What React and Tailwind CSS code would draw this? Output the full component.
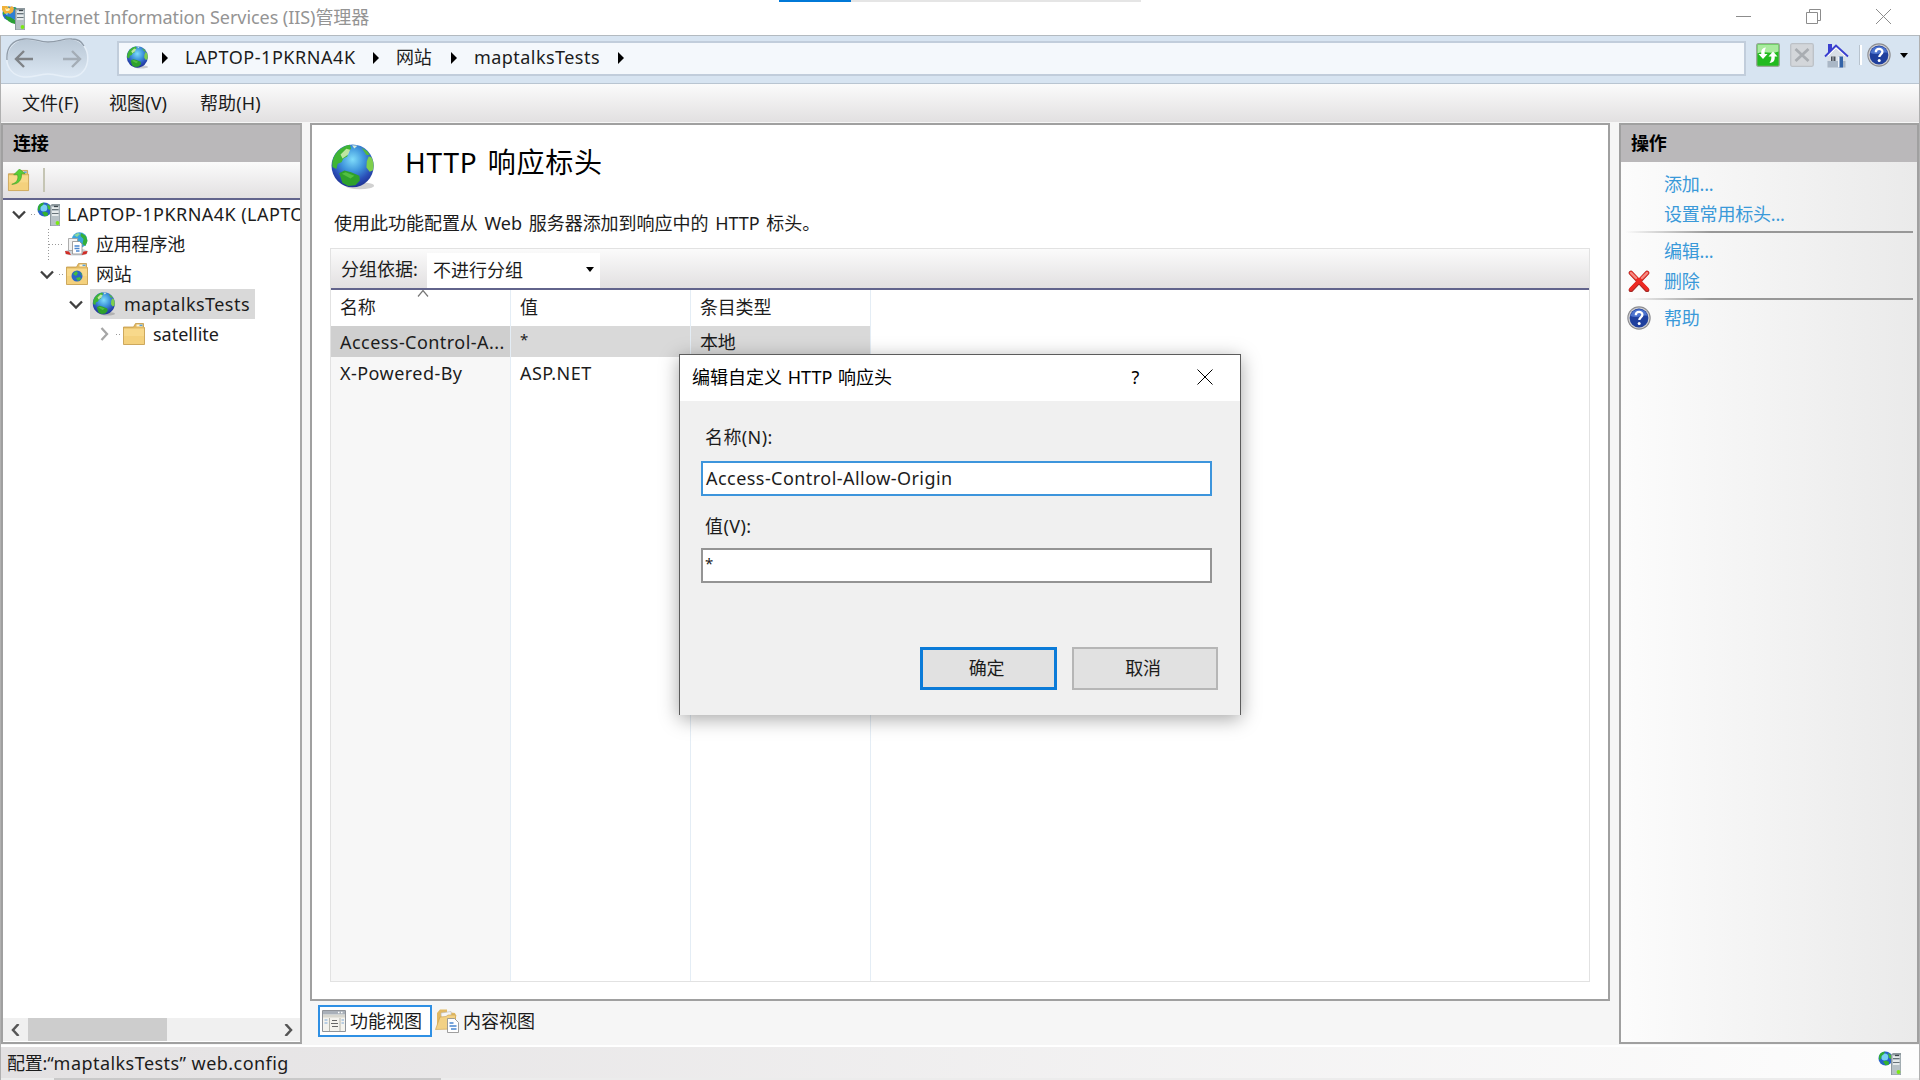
import React from 'react';

const Globe = ({ className, id }) => (
  <svg viewBox="0 0 24 24" className={className}>
    <defs>
      <radialGradient id={id} cx="0.5" cy="0.35" r="0.62">
        <stop offset="0" stopColor="#7fdcfa" />
        <stop offset="0.45" stopColor="#3f95dc" />
        <stop offset="0.8" stopColor="#2a4fb8" />
        <stop offset="1" stopColor="#22389a" />
      </radialGradient>
    </defs>
    <ellipse cx="15.5" cy="21.8" rx="7.5" ry="1.8" fill="#000" opacity="0.18" />
    <ellipse cx="11.8" cy="11.4" rx="11" ry="11.2" fill={`url(#${id})`} />
    <path d="M1.200 9.500C2 5 5.500 1.200 10.300 .4L11 2.200 9.500 4.500 9 6.500 7 7.500 6 9.500 4 10.300 3.300 13 1.200 12z" fill="#3fb534" />
    <path d="M5.500 5.500L8.500 2.500l2 .5-1 2.500-3 2z" fill="#dff3bd" opacity="0.8" />
    <path d="M11.500 .6l1.200 1.800 1.600-1.500z" fill="#e4f5dc" opacity="0.9" />
    <path d="M4.800 15.300l2.700-1.500 3.500.9 4.300 1.800.3 2.500-2.300 2.500-3.800.4-3-1.500z" fill="#2fa12c" />
    <path d="M6.200 15.500l2-.8 4.500 1.800-2 1.500z" fill="#63cc4c" opacity="0.7" />
    <path d="M20.200 6.500l1.300.3c1.400 2.500 1.500 5 .8 7l-1.600.7-1.700-2.200.2-3.300z" fill="#7ecf4c" />
    <path d="M16.500 2l3 1.800 1.200 2-1.700 0z" fill="#57b93a" />
  </svg>
);

const Tower = () => (
  <g>
    <path d="M13 3.500l2-1.500h8v22h-10z" fill="#8e999e" />
    <path d="M14 4h8.500v19.500H14z" fill="#b7c1c6" />
    <path d="M15 6h6.500M15 10h6.500M15 13h6.500" stroke="#f5f7f8" strokeWidth="1.300" />
    <path d="M15 7.500h6.500M15 11.500h6.500" stroke="#5f6a70" strokeWidth="0.900" />
    <path d="M17 4.500h4" stroke="#3c464c" strokeWidth="1.300" />
    <circle cx="20.500" cy="21" r="1.900" fill="#7bea12" />
  </g>
);

const ServerIcon = ({ className, badge }) => (
  <svg viewBox="0 0 24 24" className={className}>
    <circle cx="7.500" cy="7.500" r="7" fill="#2763cb" />
    <circle cx="6.800" cy="6" r="3.500" fill="#77cff5" />
    <path d="M1 5c1-3 3-4.200 6-4.500L6 3 3.500 5 3 8 1 9z" fill="#2fae35" />
    <path d="M5 10.500l3-1 3 1.500-.5 3-3 .3z" fill="#35b22f" />
    <path d="M10 2l3 2v4l-2-1z" fill="#42bb38" />
    {badge && (
      <g>
        <path d="M8 1h5l5 3-2 7-6 5-6-3z" fill="#2d7fd4" />
        <path d="M12 1l4 2 1 4-4-2z" fill="#35a83a" />
        <path d="M0 0h5l2 2 3-2 2 2-1 4-3 2-2-1-3 1-3-4z" fill="#f0b23c" />
        <path d="M3 2l2 1 2-1 1 2-2 1-2 0z" fill="#fff0b0" />
        <path d="M3 10l5 1 5 3v4C8 17 4 14 3 10z" fill="#2b9f35" />
      </g>
    )}
    <Tower />
  </svg>
);

const FolderIcon = ({ className, children }) => (
  <svg viewBox="0 0 24 24" className={className}>
    <path d="M1.500 5h10l2-3.500h8V5l1 .5V22.500h-21z" fill="#e2b963" stroke="#c49a48" strokeWidth="0.800" />
    <path d="M2 6.500h20V22H2z" fill="#f8d98b" />
    <path d="M2 14h20v8H2z" fill="#f1cb75" opacity="0.600" />
    <path d="M14.500 2.500h6v2h-6z" fill="#fff6dc" />
    <path d="M17.500 2.600h3v1.500h-3z" fill="#59a3dc" />
    {children}
  </svg>
);

const PoolIcon = ({ className }) => (
  <svg viewBox="0 0 24 24" className={className}>
    <circle cx="15.500" cy="8" r="7.800" fill="#3aa3de" />
    <path d="M17 1l5 3 1.500 5-2 5-3-2 1-5-3-3z" fill="#34b03a" />
    <path d="M10 3l4-2 2 1-3 3z" fill="#8ed89a" />
    <path d="M1 19l5-2h13l5 2-1 3-5 1.500H7L1 22z" fill="#cdd3d8" />
    <path d="M1 19l4 .5 2 3.500-5-1zM23.500 19l-4 .5-2 3.500 5-1z" fill="#d12c25" />
    <path d="M4.500 6.500h9v12h-9z" fill="#f1f1f1" stroke="#999" strokeWidth="0.800" />
    <path d="M8.500 9.500h7l2.500 2.500v10H8.500z" fill="#fff" stroke="#8d8d8d" strokeWidth="0.800" />
    <path d="M10.500 14h5M10.500 16.500h5M12 19h3.500" stroke="#4a86cf" strokeWidth="1.300" />
  </svg>
);

const HelpIcon = ({ className }) => (
  <svg viewBox="0 0 24 24" className={className}>
    <circle cx="12" cy="12" r="11.700" fill="#8b8b8f" />
    <circle cx="12" cy="12" r="10.600" fill="#d0d0d2" />
    <circle cx="12" cy="12" r="9.400" fill="#1f3f9d" />
    <path d="M3.500 10a8.700 8.700 0 0 1 17 0c-4-2-10 3-17 0z" fill="#4d74cf" />
    <path d="M8.800 9.200c0-4.400 6.600-4.200 6.600-.4 0 2.600-3.100 2.600-3.100 5.200" fill="none" stroke="#fff" strokeWidth="2.300" />
    <circle cx="12.200" cy="17.400" r="1.500" fill="#fff" />
  </svg>
);

const RefreshIcon = () => (
  <svg viewBox="0 0 24 24" className="h-6 w-6">
    <rect x="0.700" y="0.700" width="22.600" height="22.600" rx="1.500" fill="#22bb1f" stroke="#98a898" strokeWidth="1.300" />
    <path d="M1.500 1.500h21v7c-7 3-14-1-21 2z" fill="#a9eb9e" />
    <path d="M10 4.500C5.500 5 5 8 5.300 11H2.500l4.500 5 4.500-5H8.700c-.2-2.500 0-4 1.300-6.500z" fill="#fff" />
    <path d="M13.500 20c4.500-.5 5.500-3 5.200-6.500h2.800l-4.500-5-4.500 5h2.800c.2 2.500-.2 4-1.800 6.500z" fill="#fff" />
  </svg>
);

const StopIcon = () => (
  <svg viewBox="0 0 24 24" className="h-6 w-6">
    <rect x="0.700" y="0.700" width="22.600" height="22.600" rx="1.500" fill="#d3d6da" stroke="#bcc1c7" strokeWidth="1.300" />
    <path d="M5.500 6l13 12M18.500 6L5.500 18" stroke="#a9adb2" strokeWidth="2.800" />
  </svg>
);

const HomeIcon = () => (
  <svg viewBox="0 0 25 25" className="h-[25px] w-[25px]">
    <path d="M4 1h4v6l-4 4z" fill="#3a3fd0" />
    <path d="M3.500 12L12 3.500l9.500 8.500v12.500h-18z" fill="#d9dfe6" />
    <path d="M3.500 18h18v6.500h-18z" fill="#aab7c6" />
    <path d="M1 13.500L12 2.500l12 11" fill="none" stroke="#3a3fd0" strokeWidth="1.800" />
    <path d="M4 13l8-8 9 8" fill="none" stroke="#fff" strokeWidth="1" />
    <path d="M7 13.500h4.500V18H7z" fill="#4c525b" />
    <path d="M9 13.500V18" stroke="#d9dfe6" strokeWidth="0.800" />
    <path d="M14.500 13.500h4.500v11h-4.500z" fill="#3263a8" />
    <path d="M14 13.500h1.500v11H14z" fill="#f3f5f8" />
  </svg>
);

const Arrow = ({ className }) => (
  <svg viewBox="0 0 6 12" className={`h-3 w-1.5 shrink-0 ${className}`}>
    <path d="M0 0l6 6-6 6z" fill="#000" />
  </svg>
);

const Caret = ({ className }) => (
  <svg viewBox="0 0 8 5" className={`h-[5px] w-2 ${className}`}>
    <path d="M0 0h8L4 5z" fill="#000" />
  </svg>
);

const Chevron = ({ open }) => (
  <svg viewBox="0 0 14 14" className="h-3.5 w-3.5 shrink-0">
    <path
      d={open ? 'M1 4.500l6 6 6-6' : 'M4.500 1l5.500 6-5.500 6'}
      fill="none"
      stroke={open ? '#404040' : '#a6a6a6'}
      strokeWidth="2.300"
    />
  </svg>
);

const Dots = ({ className }) => (
  <span className={`h-px shrink-0 bg-[repeating-linear-gradient(90deg,#999_0_1px,transparent_1px_3px)] ${className}`} />
);

// Latin runs are set a little wider than the Chinese ones
const Latin = ({ className = '', children }) => <span className={`tracking-[0.45px] ${className}`}>{children}</span>;

const TitleBar = () => (
  <div className="relative flex h-[35px] items-center bg-white pl-0.5 text-[#949494]">
    <ServerIcon className="mr-[5px] h-6 w-6" badge />
    <span className="-mt-0.5 text-[18px] tracking-[-0.06px]">Internet Information Services (IIS)管理器</span>
    <div className="absolute top-0 left-[779px] flex h-0.5 w-[362px] bg-[#e5e5e5]">
      <div className="w-[72px] bg-[#0078d7]" />
    </div>
    <div className="mr-[29px] -mt-0.5 ml-auto flex items-center gap-[55px]">
      <svg viewBox="0 0 15 15" className="h-[15px] w-[15px]"><path d="M0 7.500h15" stroke="#8c8c8c" /></svg>
      <svg viewBox="0 0 15 15" className="h-[15px] w-[15px]">
        <path d="M.5 3.500h11v11H.5zM3.500 3.500v-3h11v11h-3" fill="none" stroke="#8c8c8c" />
      </svg>
      <svg viewBox="0 0 15 15" className="h-[15px] w-[15px]"><path d="M0 0l15 15M15 0L0 15" stroke="#8c8c8c" /></svg>
    </div>
  </div>
);

const AddressBar = () => (
  <div className="flex h-[49px] border-t border-b border-t-[#b3bac0] border-b-[#b9c5d1] bg-[#d7e4f1] pt-[2px]">
    <svg viewBox="0 0 86 42" className="ml-[3px] h-[42px] w-[86px]">
      <defs>
        <linearGradient id="pill" x1="0" y1="0" x2="0" y2="1">
          <stop offset="0" stopColor="#b8c6d4" />
          <stop offset="1" stopColor="#dbe7f3" />
        </linearGradient>
      </defs>
      <path d="M20 1C32 0 34 4 44 4S60 0 68 1c22 3 20 37 0 38-9 1-14-3-24-3s-15 4-24 3C-3 37-3 4 20 1z" fill="url(#pill)" stroke="#e6eff8" strokeWidth="1.500" />
      <path d="M3 22C2 9 9 2 20 1c12-1 14 3 24 3S60 0 68 1c6 0 10 3 12 7" fill="none" stroke="#8f9ba8" strokeWidth="1.300" />
      <path d="M29 21H12m8-8l-8 8 8 8" fill="none" stroke="#7f8387" strokeWidth="2.400" />
      <path d="M59 21h17m-8-8l8 8-8 8" fill="none" stroke="#a4adb6" strokeWidth="2.400" />
    </svg>
    <div className="mt-[3px] ml-[27px] flex h-[35px] w-[1629px] items-center border-2 border-[#c1cddb] bg-[#f4f8fc] pb-0.5 pl-[7px]">
      <Globe className="h-[23px] w-[23px]" id="globe-addr" />
      <Arrow className="ml-[13px]" />
      <Latin className="-mt-0.5 ml-[17px] w-[172px] tracking-[0.55px]">LAPTOP-1PKRNA4K</Latin>
      <Arrow className="ml-[16px]" />
      <span className="-mt-0.5 ml-[17px] w-[38px]">网站</span>
      <Arrow className="ml-[17px]" />
      <Latin className="-mt-0.5 ml-[17px] w-[126px]">maptalksTests</Latin>
      <Arrow className="ml-[18px]" />
    </div>
    <div className="mt-[5px] ml-[10px] flex h-6 items-center">
      <RefreshIcon />
      <span className="w-[10px]" />
      <StopIcon />
      <span className="w-[10px]" />
      <HomeIcon />
      <span className="mr-[5px] ml-[10px] h-5 w-[3px] border-l border-[#b8c3ce] bg-white" />
      <HelpIcon className="h-6 w-6" />
      <Caret className="ml-[9px]" />
    </div>
  </div>
);

const PanelHeader = ({ children }) => (
  <div className="flex h-[37px] shrink-0 items-center bg-[#bab8ba] pb-px pl-[10px] font-bold text-black">{children}</div>
);

const Connections = () => (
  <aside className="flex w-[301px] flex-col border-2 border-[#a0a0a0] border-r-[#a8a8a8] bg-white">
    <PanelHeader>连接</PanelHeader>
    <div className="flex h-[38px] shrink-0 items-center border-b-2 border-[#62648c] bg-gradient-to-b from-[#fbfbfb] to-[#e2e0e1] pl-[4px]">
      <FolderIcon className="h-[23px] w-[23px]">
        <path d="M5 16c6-2 7-6 6-10H7l6-6 6 5h-4c1 6-3 11-10 11z" fill="#57cf35" stroke="#3c9c25" strokeWidth="0.600" />
      </FolderIcon>
      <span className="ml-[13px] h-6 w-[2px] bg-[#c5c5b4]" />
    </div>
    <div className="relative -mt-px flex-1 overflow-hidden whitespace-nowrap">
      <div className="absolute top-[30px] left-[45px] h-8 w-px bg-[repeating-linear-gradient(180deg,#999_0_1px,transparent_1px_3px)]" />
      <div className="flex h-[30px] items-center pl-[9px]">
        <Chevron open />
        <Dots className="ml-[5px] w-[6px]" />
        <ServerIcon className="h-6 w-6 shrink-0" />
        <Latin className="ml-[6px]">LAPTOP-1PKRNA4K (LAPTOP</Latin>
      </div>
      <div className="flex h-[30px] items-center pl-[46px]">
        <Dots className="w-[15px]" />
        <PoolIcon className="h-6 w-6" />
        <span className="ml-[8px]">应用程序池</span>
      </div>
      <div className="flex h-[30px] items-center pl-[37px]">
        <Chevron open />
        <Dots className="ml-[5px] w-[6px]" />
        <FolderIcon className="h-6 w-6">
          <circle cx="12" cy="14" r="5.500" fill="#2b66c8" />
          <path d="M8 12l3-3 2 2-2 3zM11 16l4-1 1 2-3 2zM15 10l2 2v2z" fill="#45bd3c" />
        </FolderIcon>
        <span className="ml-[7px]">网站</span>
      </div>
      <div className="flex h-[30px] items-center pl-[66px]">
        <Chevron open />
        <div className="ml-[7px] flex h-[30px] w-[165px] items-center bg-[#d9d9d9] pl-0.5">
          <Globe className="h-6 w-6" id="globe-tree" />
          <Latin className="ml-[8px]">maptalksTests</Latin>
        </div>
      </div>
      <div className="flex h-[30px] items-center pl-[94px]">
        <Chevron />
        <Dots className="ml-[5px] w-[6px]" />
        <FolderIcon className="h-6 w-6" />
        <span className="ml-[7px] tracking-[0px]">satellite</span>
      </div>
    </div>
    <div className="mb-px flex h-[23px] shrink-0 items-center bg-[#f0f0f0]">
      <svg viewBox="0 0 10 12" className="ml-[7px] h-3 w-2.5"><path d="M8.500 0L3 6l5.500 6" fill="none" stroke="#555" strokeWidth="2.500" /></svg>
      <div className="ml-[8px] h-[23px] w-[139px] bg-[#cdcdcd]" />
      <svg viewBox="0 0 10 12" className="mr-[6px] ml-auto h-3 w-2.5"><path d="M1.500 0L7 6l-5.500 6" fill="none" stroke="#555" strokeWidth="2.500" /></svg>
    </div>
  </aside>
);

const HeaderTable = () => (
  <div className="relative grid flex-1 grid-cols-[180px_180px_180px_1fr]">
    <svg viewBox="0 0 12 7" className="absolute top-0 left-[86px] h-[7px] w-3"><path d="M1 6.500l5-6 5 6" fill="none" stroke="#777" strokeWidth="1.200" /></svg>
    {[
      ['名称', 'Access-Control-A...', 'X-Powered-By'],
      ['值', '*', 'ASP.NET'],
      ['条目类型', '本地', ''],
    ].map(([head, first, second], i) => (
      <div key={head} className={`border-r border-[#e4edf5] ${i === 0 ? 'bg-[#f7f7f7]' : ''}`}>
        <div className="flex h-9 items-center bg-white pb-0.5 pl-[9px]">{head}</div>
        <div className={`flex h-[31px] items-center pl-[9px] ${i === 0 ? 'bg-[#cfcfcf]' : 'bg-[#d9d9d9]'}`}>
          {first === '*' ? <span className="-mt-1 text-[15px]">*</span> : i === 0 ? <Latin>{first}</Latin> : first}
        </div>
        <div className="flex h-8 items-center pl-[9px]">
          <Latin className="tracking-[0.6px]">{second}</Latin>
        </div>
      </div>
    ))}
  </div>
);

const Feature = () => (
  <main className="ml-[8px] flex w-[1300px] flex-col">
    <section className="flex h-[878px] flex-col border-2 border-[#a0a0a0] bg-white px-[18px] pb-[17px]">
      <div className="mt-[18px] flex h-[48px] items-center">
        <Globe className="h-[48px] w-[46px]" id="globe-title" />
        <h1 className="-mt-[11px] ml-[29px] text-[28px] tracking-[0.8px] [word-spacing:2px] text-black">HTTP 响应标头</h1>
      </div>
      <p className="mt-[18px] ml-[4px] flex h-[28px] items-center tracking-[-0.02px] [word-spacing:2px]">使用此功能配置从 Web 服务器添加到响应中的 HTTP 标头。</p>
      <div className="mt-[11px] flex flex-1 flex-col border border-[#e2e2e2]">
        <div className="flex h-[41px] items-center border-b-2 border-[#62648c] bg-gradient-to-b from-[#fbfbfb] to-[#e2e0e1] pl-[10px]">
          <span className="w-[86px] tracking-[0px]">分组依据:</span>
          <div className="mt-1 flex h-[35px] w-[173px] items-center bg-white pb-0.5 pl-[6px] tracking-[0px]">
            不进行分组
            <Caret className="mr-[6px] ml-auto" />
          </div>
        </div>
        <HeaderTable />
      </div>
    </section>
    <div className="mt-1 ml-[8px] flex items-center">
      <div className="flex h-[32px] w-[114px] items-center border-2 border-[#2f90e4] bg-white pl-0.5">
        <svg viewBox="0 0 24 24" className="h-6 w-6">
          <path d="M.5 1.500h23v21H.5z" fill="#f4f3ee" stroke="#8f9399" />
          <path d="M1 2h22v3.500H1z" fill="#a9b0b9" />
          <path d="M16 3.500h1.500M19 3.500h1.500" stroke="#fff" strokeWidth="1.500" />
          <path d="M1 6h22v2.500H1z" fill="#d8d7cf" />
          <path d="M7.500 9v13M18 9v13" stroke="#b5b5ac" />
          <path d="M2.500 11h3M2.500 14h3M19.500 11h2.500M19.500 14h2.500" stroke="#7ea8d8" />
          <path d="M10 11.500h5M9 14.500h7M10 17.500h6" stroke="#666" strokeWidth="1.200" />
        </svg>
        <span className="ml-[4px] tracking-[0px]">功能视图</span>
      </div>
      <svg viewBox="0 0 24 24" className="ml-[3px] h-6 w-6">
        <path d="M2 4l3-3.500h7V3l8 1 1 3v12H2z" fill="#e2b963" />
        <path d="M6 4l10-1.500 1 12-10 3z" fill="#f6f6f6" stroke="#b9b9b9" strokeWidth="0.600" />
        <path d="M.5 20.500L5 8l6-.5 2-1.500 8 0-3 14z" fill="#f3d184" stroke="#c79e4d" strokeWidth="0.600" />
        <path d="M12.500 9.500h7l4 4v10h-11z" fill="#fff" stroke="#888" strokeWidth="0.800" />
        <path d="M14.500 14h4M14.500 17h7M16 20h5.500" stroke="#4a86cf" strokeWidth="1.300" />
      </svg>
      <span className="ml-[4px] tracking-[0px]">内容视图</span>
    </div>
  </main>
);

const Action = ({ icon, children }) => (
  <div className="flex h-[30px] items-center pl-[6px]">
    <span className="flex w-[37px]">{icon}</span>
    {children}
  </div>
);

const Rule = () => <div className="mt-[2px] mr-[4px] mb-[3px] ml-1 h-0.5 bg-gradient-to-r from-transparent via-[#989898] via-30% to-[#989898]" />;

const Actions = () => (
  <aside className="ml-[9px] w-[300px] border-2 border-[#a0a0a0] bg-gradient-to-r from-[#fcfcfc] to-[#eaeaea]">
    <PanelHeader>操作</PanelHeader>
    <div className="pt-[7px] text-[#3a99d9]">
      <Action>添加...</Action>
      <Action>设置常用标头...</Action>
      <Rule />
      <Action>编辑...</Action>
      <Action
        icon={
          <svg viewBox="0 0 22 22" className="ml-px h-[22px] w-[22px]">
            <path d="M3 3l16 17M19 3L3 20" stroke="#a52a26" strokeWidth="4.600" strokeLinecap="round" />
            <path d="M3 3l16 16M19 3L3 19" stroke="#ee2a24" strokeWidth="3.600" strokeLinecap="round" />
            <path d="M3 3l5 5M19 3l-5 5" stroke="#f58c84" strokeWidth="2.400" strokeLinecap="round" />
          </svg>
        }
      >
        删除
      </Action>
      <Rule />
      <Action icon={<HelpIcon className="h-6 w-6" />}>帮助</Action>
    </div>
  </aside>
);

const EditDialog = () => (
  <div className="absolute top-[354px] left-[679px] h-[361px] w-[562px] border border-b-0 border-[#5c5c5c] bg-[#f0f0f0] shadow-[0_4px_18px_rgba(0,0,0,0.35)]">
    <div className="flex h-[46px] items-center bg-white pl-3 text-[18px] text-black">
      <span className="-mt-0.5 tracking-[0px] [word-spacing:1px]">编辑自定义 HTTP 响应头</span>
      <span className="-mt-0.5 mr-[58px] ml-auto">?</span>
      <svg viewBox="0 0 16 16" className="-mt-0.5 mr-[27px] h-4 w-4"><path d="M.5.5l15 15M15.500.5l-15 15" stroke="#000" /></svg>
    </div>
    <div className="px-[21px] pt-[22px]">
      <label className="flex h-[28px] items-center pl-[4px] tracking-[0.4px]">名称(N):</label>
      <div className="mt-[10px] flex h-[35px] w-[511px] items-center border-2 border-[#3d95dc] bg-white pb-px pl-[3px]">
        <Latin>Access-Control-Allow-Origin</Latin>
      </div>
      <label className="mt-[16px] flex h-[28px] items-center pl-[4px] tracking-[0.4px]">值(V):</label>
      <div className="mt-[8px] flex h-[35px] w-[511px] items-center border-2 border-[#949494] bg-white pb-1 pl-0.5 text-[15px]">*</div>
      <div className="mt-[64px] flex gap-[15px] pl-[219px]">
        <button className="h-[43px] w-[137px] border-3 border-[#0b7bd8] bg-[#e1e1e1] pr-1 pb-0.5">确定</button>
        <button className="h-[43px] w-[146px] border-2 border-[#b6b6b6] bg-[#e1e1e1] pr-1 pb-0.5">取消</button>
      </div>
    </div>
  </div>
);

const StatusBar = () => (
  <footer>
    <div className="flex h-[33px] items-center border-t-2 border-white bg-gradient-to-r from-[#e3e1e2] to-[#fdfdfd] pr-[17px] pl-[6px]">
      <span>配置:</span>
      <Latin>“maptalksTests” web.config</Latin>
      <ServerIcon className="ml-auto h-6 w-6" />
    </div>
    <div className="flex h-0.5 bg-[#ececec] pl-[53px]">
      <div className="w-[387px] bg-[#c9c9c9]" />
    </div>
  </footer>
);

export default function App() {
  return (
    <div className="relative flex h-[1080px] w-[1920px] flex-col overflow-hidden bg-[#f6f6f6] font-['Noto_Sans','Noto_Sans_CJK_SC',sans-serif] text-[18px] leading-none tracking-[-0.2px] whitespace-nowrap text-[#1c1c1c]">
      <TitleBar />
      <div className="flex flex-1 flex-col border-x border-[#b0b0b0]">
        <AddressBar />
        <nav className="flex h-[38px] items-center bg-gradient-to-b from-[#fbfbfb] to-[#e2e0e1] pl-[21px]">
          <span className="w-[87px] tracking-[0.1px]">文件(F)</span>
          <span className="w-[91px] tracking-[0.1px]">视图(V)</span>
          <span className="tracking-[0.1px]">帮助(H)</span>
        </nav>
        <div className="mt-[1px] flex h-[921px]">
          <Connections />
          <Feature />
          <Actions />
        </div>
        <div className="mt-[1px]">
          <StatusBar />
        </div>
      </div>
      <EditDialog />
    </div>
  );
}
